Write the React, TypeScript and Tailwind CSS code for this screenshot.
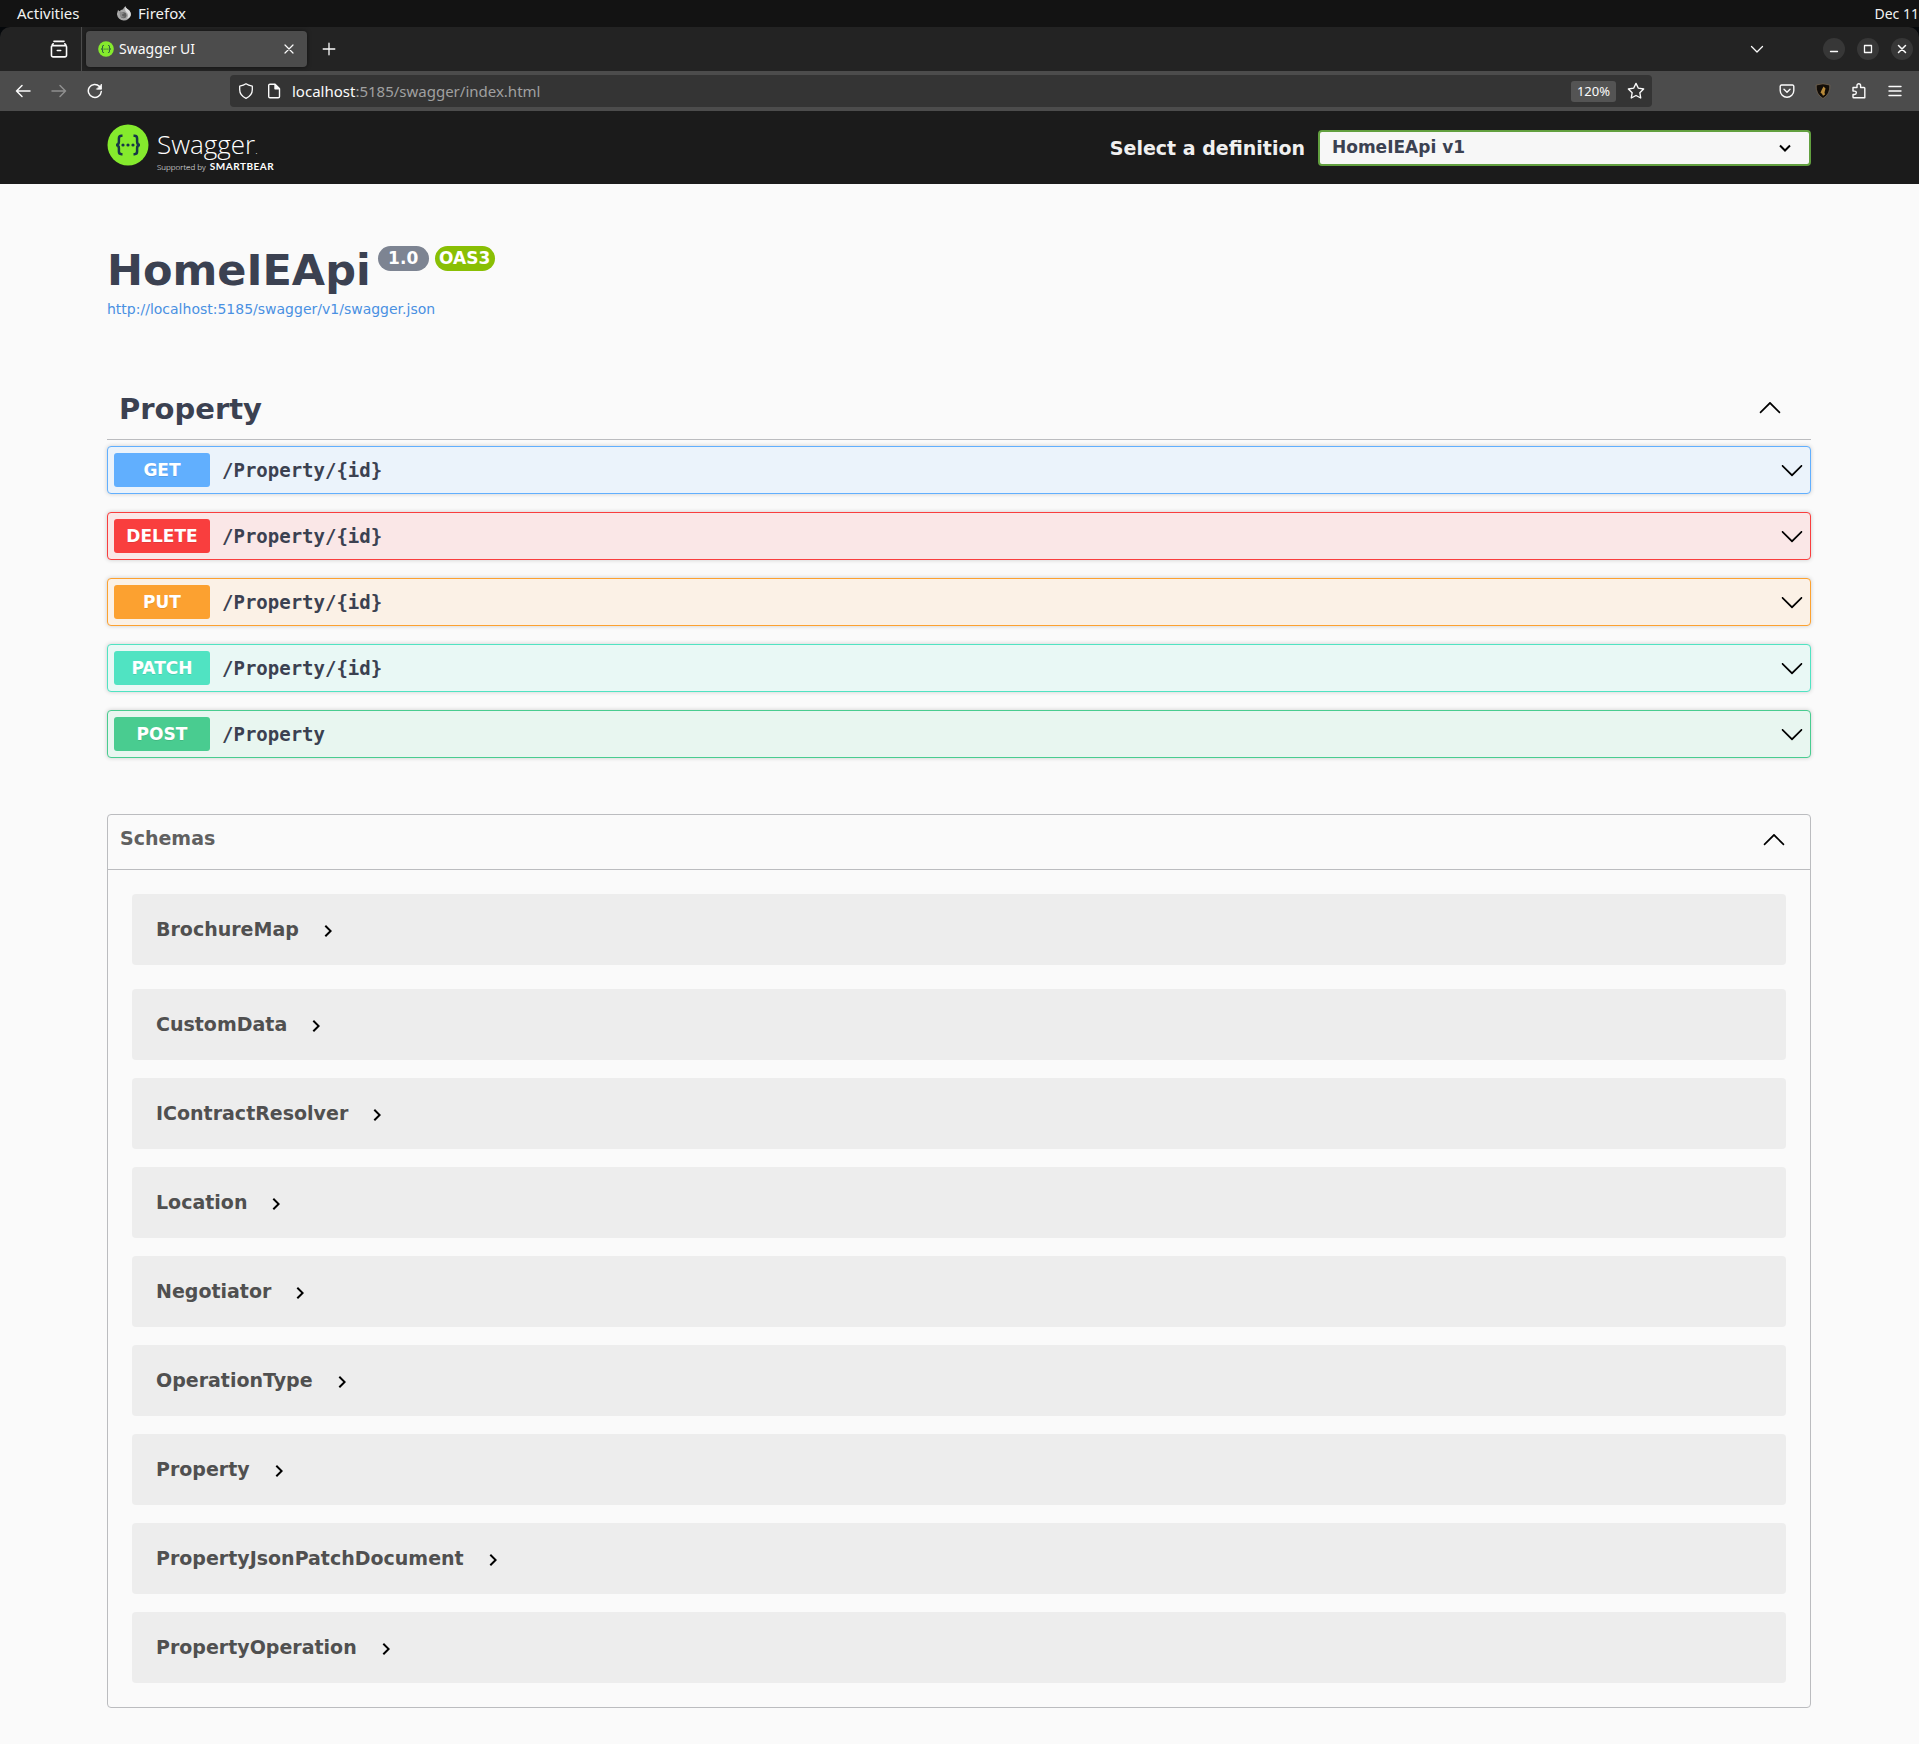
import React from "react";

const operations = [
  { method: "GET", path: "/Property/{id}", box: "border-[#61affe] bg-[#ebf3fb]", badge: "bg-[#61affe]" },
  { method: "DELETE", path: "/Property/{id}", box: "border-[#f93e3e] bg-[#fae7e7]", badge: "bg-[#f93e3e]" },
  { method: "PUT", path: "/Property/{id}", box: "border-[#fca130] bg-[#fbf1e6]", badge: "bg-[#fca130]" },
  { method: "PATCH", path: "/Property/{id}", box: "border-[#50e3c2] bg-[#e9f8f5]", badge: "bg-[#50e3c2]" },
  { method: "POST", path: "/Property", box: "border-[#49cc90] bg-[#e8f6f0]", badge: "bg-[#49cc90]" },
];

const schemas = [
  "BrochureMap",
  "CustomData",
  "IContractResolver",
  "Location",
  "Negotiator",
  "OperationType",
  "Property",
  "PropertyJsonPatchDocument",
  "PropertyOperation",
];

const ARROW_DOWN =
  "M17.418 6.109c.272-.268.709-.268.979 0s.271.701 0 .969l-7.908 7.83c-.27.268-.707.268-.979 0l-7.908-7.83c-.27-.268-.27-.701 0-.969.271-.268.709-.268.979 0L10 13.25l7.418-7.141z";
const ARROW_UP =
  "M17.418 14.908c.272.268.709.268.979 0s.271-.701 0-.969l-7.908-7.83c-.27-.268-.707-.268-.979 0l-7.908 7.83c-.27.268-.27.701 0 .969.271.268.709.268.979 0L10 7.767l7.418 7.141z";

function Arrow({ up = false }: { up?: boolean }) {
  return (
    <svg viewBox="0 0 20 20" className={up ? "mb-[6px] size-6 shrink-0" : "size-6 shrink-0"} fill="#000" aria-hidden="true">
      <path d={up ? ARROW_UP : ARROW_DOWN} />
    </svg>
  );
}

function Line({ children, className = "size-4", width = 1.3 }: { children: React.ReactNode; className?: string; width?: number }) {
  return (
    <svg
      viewBox="0 0 16 16"
      className={`shrink-0 ${className}`}
      fill="none"
      stroke="currentColor"
      strokeWidth={width}
      strokeLinecap="round"
      strokeLinejoin="round"
      aria-hidden="true"
    >
      {children}
    </svg>
  );
}

function SwaggerMark({ className }: { className: string }) {
  return (
    <svg viewBox="0 0 42 42" className={`shrink-0 ${className}`} aria-hidden="true">
      <circle cx="21" cy="21" r="20.5" fill="#85ea2d" />
      <g fill="none" stroke="#173647" strokeWidth="2.5">
        <path d="M15.5 11.8h-1c-1.8 0-2.6.9-2.6 2.6v3.4c0 2-.8 3.1-2.8 3.2 2 .1 2.8 1.2 2.8 3.2v3.4c0 1.7.8 2.6 2.6 2.6h1" />
        <path d="M26.5 11.8h1c1.8 0 2.6.9 2.6 2.6v3.4c0 2 .8 3.1 2.8 3.2-2 .1-2.8 1.2-2.8 3.2v3.4c0 1.7-.8 2.6-2.6 2.6h-1" />
      </g>
      <g fill="#173647">
        <circle cx="16" cy="21" r="1.6" />
        <circle cx="21" cy="21" r="1.6" />
        <circle cx="26" cy="21" r="1.6" />
      </g>
    </svg>
  );
}

function DesktopBar() {
  return (
    <div className="flex h-[27px] items-center justify-between bg-[#131313] pl-[17px] text-[#f2f2f2]">
      <div className="flex items-center">
        <button className="w-[99px] text-left">Activities</button>
        <button className="flex items-center gap-[6px]">
          <svg viewBox="0 0 16 16" className="size-4" aria-hidden="true">
            <path d="M1 7.500 2 4l1.500 1.300C4.500 4 6 3.500 7 3.500 7.500 2 8.500.8 9.700.2c0 1.800 1.300 2.500 2.700 3.600 1.800 1.400 2.600 3.200 2.400 5.200A7 7 0 0 1 1 8.500z" fill="#a8a8a8" />
            <path d="M9.700.2c0 1.800 1.300 2.500 2.700 3.600 1.800 1.400 2.600 3.200 2.400 5.200-.5 2-2 3.500-4 3.500 1.500-1.500 1.700-3.500.7-5S8 5 9.700.2z" fill="#dedede" />
            <circle cx="7.500" cy="9.200" r="3" fill="#5f5f5f" />
            <path d="M3.500 5.500c1.300 0 2 .5 3 1.300l2 .2-2.500 1.500c0 2 2 2.500 3.500 2-1.500 1.800-5 1.300-5.500-1.200z" fill="#8b8b8b" />
          </svg>
          Firefox
        </button>
      </div>
      <time className="text-sm">Dec 11</time>
    </div>
  );
}

function TabStrip() {
  return (
    <div className="bg-[#05080b]">
      <div className="flex h-11 items-center rounded-t-[10px] bg-[#232323] pr-[6px] text-[#fbfbfb]">
        <button aria-label="Firefox View" className="flex h-full w-[82px] items-center justify-end border-r border-[#4c4c4c] pr-[13px]">
          <Line className="size-[18px]" width={1.4}>
            <path d="M3.500 1.200h9M2.300 5h11.400a1 1 0 0 1 1 1v7.500a1.500 1.500 0 0 1-1.500 1.500H2.800a1.500 1.500 0 0 1-1.500-1.500V6a1 1 0 0 1 1-1zM2 4.300l.8-1M14 4.300l-.8-1M6.500 9.300h3" />
          </Line>
        </button>
        <div className="ml-1 flex h-9 w-[221px] items-center rounded bg-[#4c4c4c] pr-[10px] pl-3 shadow-[0_0_4px_rgba(0,0,0,0.5)]">
          <SwaggerMark className="size-4" />
          <span className="ml-[5px] flex-1 text-sm">Swagger UI</span>
          <button aria-label="Close tab">
            <Line width={1.2}>
              <path d="m4 4 8 8M12 4l-8 8" />
            </Line>
          </button>
        </div>
        <button aria-label="New tab" className="ml-[14px]">
          <Line width={1.3}>
            <path d="M8 2.200v11.600M2.200 8h11.600" />
          </Line>
        </button>
        <div className="flex-1" />
        <button aria-label="List all tabs" className="mr-[58px]">
          <Line>
            <path d="m2.500 5.500 5.500 5.500 5.500-5.500" />
          </Line>
        </button>
        <div className="flex gap-3">
          <button aria-label="Minimize" className="grid size-[22px] place-items-center rounded-full bg-[#373737]">
            <Line width={1.3}>
              <path d="M4.500 10.500h7" />
            </Line>
          </button>
          <button aria-label="Maximize" className="grid size-[22px] place-items-center rounded-full bg-[#373737]">
            <Line width={1.3}>
              <path d="M4.500 4.500h7v7h-7z" />
            </Line>
          </button>
          <button aria-label="Close window" className="grid size-[22px] place-items-center rounded-full bg-[#373737]">
            <Line width={1.5}>
              <path d="m4.500 4.500 7 7M11.500 4.500l-7 7" />
            </Line>
          </button>
        </div>
      </div>
    </div>
  );
}

function Toolbar() {
  return (
    <div className="flex h-10 items-center bg-[#4c4c4c] pr-4 pl-[15px] text-[#fbfbfb]">
      <div className="flex w-[215px] gap-5">
        <button aria-label="Back">
          <Line width={1.5}>
            <path d="M15 8H1.500M7 2.500 1.500 8 7 13.500" />
          </Line>
        </button>
        <button aria-label="Forward" className="text-[#8f8f8f]">
          <Line width={1.5}>
            <path d="M1 8h13.500M9 2.500 14.500 8 9 13.500" />
          </Line>
        </button>
        <button aria-label="Reload">
          <Line width={1.5}>
            <path d="M14.300 8.500A6.500 6.500 0 1 1 12.500 3.400" />
            <path d="M14.500 1.500v4.700H9.800z" fill="currentColor" strokeWidth="0.8" />
          </Line>
        </button>
      </div>
      <div className="flex h-8 flex-1 items-center rounded bg-[#343434] pr-[7px] pl-2">
        <Line width={1.3}>
          <path d="M8 .8c2 1.500 4 2 6.300 2.400v3.600c0 3.600-2.300 6.700-6.300 8.500-4-1.800-6.300-4.900-6.300-8.500V3.200C4 2.800 6 2.300 8 .8z" />
        </Line>
        <Line className="ml-3 size-4" width={1.4}>
          <path d="M2.700 2.500A1.300 1.300 0 0 1 4 1.200h5l4.500 4.500v7.800a1.300 1.300 0 0 1-1.300 1.300H4a1.300 1.300 0 0 1-1.300-1.300z" />
          <path d="M9 1.500v4.200h4.300z" fill="currentColor" />
        </Line>
        <div className="ml-[10px] flex-1 text-[#a0a0a0]">
          <span className="text-[#fbfbfb]">localhost</span>:5185/swagger/index.html
        </div>
        <button className="h-[21px] w-[45px] rounded-[3px] bg-[#545454] text-[13px] leading-[21px]">120%</button>
        <button aria-label="Bookmark" className="ml-[11px]">
          <Line className="size-[18px]" width={1.2}>
            <path d="m8 1.200 2.100 4.300 4.700.7-3.400 3.300.8 4.700L8 12l-4.200 2.200.8-4.700L1.200 6.200l4.700-.7z" />
          </Line>
        </button>
      </div>
      <div className="ml-[127px] flex gap-5">
        <button aria-label="Save to Pocket">
          <Line width={1.4}>
            <path d="M2.500 2h11a1.300 1.300 0 0 1 1.300 1.300V7.500a6.800 6.800 0 0 1-13.600 0V3.300A1.300 1.300 0 0 1 2.500 2zM5 6.300 8 9.200l3-2.900" />
          </Line>
        </button>
        <button aria-label="Extension">
          <svg viewBox="0 0 16 16" className="size-4" aria-hidden="true">
            <path d="M1.200 2Q8-.5 14.800 2q.8 9-6.800 13.500Q.4 11 1.200 2z" fill="#120d08" stroke="#7a6a55" strokeWidth="0.8" />
            <path d="m8.500 3.500 2 2-1 4 .5 2-2 1.200-1-2-1.500-1 1-2.500z" fill="#b98a3a" />
          </svg>
        </button>
        <button aria-label="Extensions">
          <Line width={1.4}>
            <path d="M2 6.500V4.500h4V2.600a1.800 1.800 0 0 1 3.600 0v1.900H13a.8.8 0 0 1 .8.8v9.500H2.800a.8.8 0 0 1-.8-.8V11.500h1.600a1.700 1.700 0 0 0 0-3.400H2z" />
          </Line>
        </button>
        <button aria-label="Open menu">
          <Line width={1.4}>
            <path d="M2 3.500h12M2 8h12M2 12.500h12" />
          </Line>
        </button>
      </div>
    </div>
  );
}

function SwaggerTopbar() {
  return (
    <header className="flex h-[73px] items-center justify-between bg-[#1b1b1b] pt-px pr-[108px] pl-[107px]">
      <a href="#" className="flex h-12 gap-2 text-white">
        <SwaggerMark className="size-[42px]" />
        <span className="flex flex-col pt-1 font-['Open_Sans']">
          <span className="h-8 text-[26px] leading-8 font-light">
            Swagger<span className="text-[10px]">.</span>
          </span>
          <span className="flex items-baseline gap-1 text-[8px] leading-3 font-light">
            Supported by <b className="font-['Lato'] text-[10px] leading-3 font-bold tracking-wider">SMARTBEAR</b>
          </span>
        </span>
      </a>
      <div className="flex items-center gap-[13px]">
        <label htmlFor="definition" className="text-[19px] font-bold text-[#f0f0f0]">
          Select a definition
        </label>
        <div className="relative">
          <select
            id="definition"
            className="h-9 w-[493px] appearance-none rounded border-2 border-[#62a03f] bg-[#f7f7f7] pl-3 text-[17px] font-bold text-[#3b4151]"
          >
            <option>HomeIEApi v1</option>
          </select>
          <svg viewBox="0 0 20 20" className="pointer-events-none absolute top-2 right-4 size-5" fill="none" stroke="#000" strokeWidth="2" aria-hidden="true">
            <path d="m5 7.500 5 5 5-5" />
          </svg>
        </div>
      </div>
    </header>
  );
}

export default function App() {
  return (
    <div className="min-h-screen bg-[#fafafa] font-['DejaVu_Sans',sans-serif] text-[#3b4151]">
      <div className="font-['Noto_Sans',sans-serif] text-[15px]">
        <DesktopBar />
        <TabStrip />
        <Toolbar />
      </div>
      <SwaggerTopbar />
      <main className="pt-[60px] pr-[108px] pb-9 pl-[107px]">
        <div className="flex items-start">
          <h1 className="text-[43px] leading-[52px] font-bold">HomeIEApi</h1>
          <span className="mt-[2px] ml-[7px] h-[25px] w-[51px] rounded-full bg-[#7d8492] text-center text-[17px] leading-6 font-bold text-white">1.0</span>
          <span className="mt-[2px] ml-[6px] h-[25px] w-[60px] rounded-full bg-[#89bf04] text-center text-[17px] leading-6 font-bold text-white">OAS3</span>
        </div>
        <a href="#" className="mt-[3px] block w-fit text-sm leading-5 text-[#4990e2]">
          http://localhost:5185/swagger/v1/swagger.json
        </a>

        <section className="mt-[61px]">
          <h2 className="border-b border-[#bbbcbf]">
            <button className="flex h-[59px] w-full items-center justify-between pr-[29px] pl-3 text-[29px] font-bold">
              Property
              <Arrow up />
            </button>
          </h2>
          <div className="mt-[6px] flex flex-col gap-[18px]">
            {operations.map((op) => (
              <button
                key={op.method}
                className={`flex h-12 w-full items-center rounded border pr-[6px] pl-[6px] shadow-[0_0_4px_rgba(0,0,0,0.19)] ${op.box}`}
              >
                <span
                  className={`h-[34px] w-24 rounded-[3px] text-center text-[17px] leading-[34px] font-bold text-white [text-shadow:0_1px_0_rgba(0,0,0,0.1)] ${op.badge}`}
                >
                  {op.method}
                </span>
                <span className="ml-3 flex-1 text-left font-['DejaVu_Sans_Mono',monospace] text-[19px] font-bold">{op.path}</span>
                <Arrow />
              </button>
            ))}
          </div>
        </section>

        <section className="mt-14 rounded border border-[#bbbcbf]">
          <h2 className="border-b border-[#bbbcbf]">
            <button className="flex h-[54px] w-full items-center justify-between pr-6 pl-3 text-[19px] font-bold text-[#606060]">
              <span className="pb-2">Schemas</span>
              <Arrow up />
            </button>
          </h2>
          <div className="flex flex-col gap-[18px] p-6">
            {schemas.map((name) => (
              <button key={name} className="flex h-[71px] items-center rounded bg-[#ededed] pl-6 text-[19px] font-bold text-[#505050] first:mb-[6px]">
                {name}
                <svg viewBox="0 0 24 24" className="mt-[3px] ml-[17px] size-6" aria-hidden="true">
                  <path d="M10 6 8.600 7.400l4.600 4.600-4.600 4.600L10 18l6-6z" fill="#000" />
                </svg>
              </button>
            ))}
          </div>
        </section>
      </main>
    </div>
  );
}
